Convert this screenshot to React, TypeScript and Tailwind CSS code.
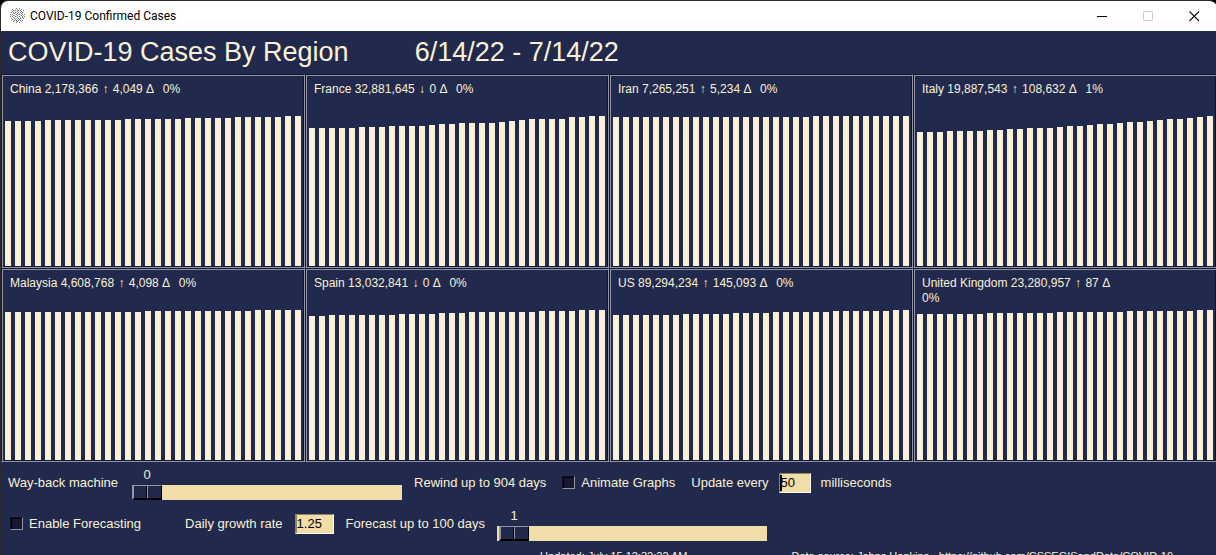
import { useState } from "react";

type Run = [height: number, days: number];

interface Region {
  name: string;
  total: string;
  arrow: "↑" | "↓";
  delta: string;
  percent: string;
  runs: Run[];
}

const regions: Region[] = [
  { name: "China", total: "2,178,366", arrow: "↑", delta: "4,049", percent: "0%", runs: [[145, 4], [146, 8], [147, 6], [148, 5], [149, 5], [150, 2]] },
  { name: "France", total: "32,881,645", arrow: "↓", delta: "0", percent: "0%", runs: [[138, 5], [139, 3], [140, 4], [141, 1], [142, 2], [143, 4], [144, 1], [145, 1], [146, 1], [147, 4], [149, 2], [150, 2]] },
  { name: "Iran", total: "7,265,251", arrow: "↑", delta: "5,234", percent: "0%", runs: [[149, 20], [150, 10]] },
  { name: "Italy", total: "19,887,543", arrow: "↑", delta: "108,632", percent: "1%", runs: [[134, 3], [135, 4], [136, 2], [137, 2], [138, 3], [139, 1], [140, 2], [141, 1], [142, 2], [143, 1], [144, 2], [145, 1], [146, 1], [147, 2], [148, 1], [149, 1], [150, 1]] },
  { name: "Malaysia", total: "4,608,768", arrow: "↑", delta: "4,098", percent: "0%", runs: [[148, 14], [149, 11], [150, 5]] },
  { name: "Spain", total: "13,032,841", arrow: "↓", delta: "0", percent: "0%", runs: [[144, 2], [145, 7], [146, 4], [147, 3], [148, 7], [149, 4], [150, 3]] },
  { name: "US", total: "89,294,234", arrow: "↑", delta: "145,093", percent: "0%", runs: [[145, 7], [146, 5], [147, 4], [148, 6], [149, 6], [150, 2]] },
  { name: "United Kingdom", total: "23,280,957", arrow: "↑", delta: "87", percent: "0%", runs: [[146, 7], [147, 7], [148, 7], [149, 7], [150, 2]] },
];

// Dotted virus: "#" is a dark speck, "+" a lighter one.
const virusDots = [
  "......#..#.....",
  "..#..+.#.+.#...",
  ".+.#.#+.#.#..#.",
  "..#.+..#.+.#...",
  ".#.#.#+.+.#.#+.",
  "...+#..#.+.#...",
  "#.#..+#.+#..#.#",
  ".+.#+..#..+#.+.",
  "#.#..#+.+#..#.#",
  "...#.+.#..+.#..",
  ".#..#.+.#.#..#.",
  "..#+.#.+.#.+...",
  ".+..#.#.#.#.#..",
  "...#..+#...+...",
  "......#..#.....",
];

function VirusIcon() {
  return (
    <svg viewBox="0 0 16 16" className="size-4 shrink-0" shapeRendering="crispEdges" aria-hidden="true">
      {virusDots.flatMap((row, y) =>
        [...row].map((dot, x) =>
          dot === "." ? null : (
            <rect key={`${x}-${y}`} x={x + 1} y={y} width="1" height="1" fill={dot === "#" ? "#7a7a7a" : "#bdbdbd"} />
          ),
        ),
      )}
    </svg>
  );
}

function TitleBar() {
  return (
    <div className="flex h-[30px] items-center bg-white pl-2 text-black">
      <VirusIcon />
      <span className="grow pl-[5px] font-['Roboto','Open_Sans',sans-serif] text-[12px]">COVID-19 Confirmed Cases</span>
      <button aria-label="Minimize" className="flex h-full w-[46px] items-center justify-center">
        <svg viewBox="0 0 11 11" className="size-[11px]"><path d="M0 5.5H10" stroke="#000" /></svg>
      </button>
      <button aria-label="Maximize" disabled className="flex h-full w-[46px] items-center justify-center">
        <svg viewBox="0 0 11 11" className="size-[11px]"><rect x=".5" y=".5" width="9" height="9" rx=".8" fill="none" stroke="#ccc" /></svg>
      </button>
      <button aria-label="Close" className="flex h-full w-[46px] items-center justify-center">
        <svg viewBox="0 0 11 11" className="size-[11px]"><path d="M.5 .5 10 10M10 .5.5 10" stroke="#111" strokeWidth="1.1" /></svg>
      </button>
    </div>
  );
}

function RegionPanel({ region }: { region: Region }) {
  const bars = region.runs.flatMap(([height, days]) => Array<number>(days).fill(height));
  return (
    <section className="border border-t-[#10152b] border-r-[#9295a6] border-b-[#9295a6] border-l-[#10152b] p-px shadow-[inset_1px_1px_0_#9295a6,inset_-1px_-1px_0_#10152b]">
      <h2 className="min-h-10 max-w-[212px] pt-[6px] pl-[7px] text-[12px] leading-[15px] whitespace-pre-wrap">
        {`${region.name} ${region.total} `}
        <span className="px-px">{region.arrow}</span>
        {` ${region.delta} `}
        <span className="pr-[2px]">Δ</span>
        {`  ${region.percent}`}
      </h2>
      <div className="flex h-[150px] items-end">
        {bars.map((height, i) => (
          <div key={i} className="flex-1 px-[2px]">
            <div className="bg-[#f9f1d7]" style={{ height }} />
          </div>
        ))}
      </div>
    </section>
  );
}

function Scale({ label, min, max, initial }: { label: string; min: number; max: number; initial: number }) {
  const [value, setValue] = useState(initial);
  const offset = Math.round((value / max) * 240);
  return (
    <div className="flex w-[270px] flex-col">
      <output className="w-[30px] text-center leading-5" style={{ marginLeft: offset }}>{value}</output>
      <input
        type="range"
        aria-label={label}
        min={min}
        max={max}
        value={value}
        onChange={(e) => setValue(Number(e.target.value))}
        className="m-0 block h-[15px] w-full appearance-none bg-[#f1dda8] [&::-webkit-slider-thumb]:h-[15px] [&::-webkit-slider-thumb]:w-[30px] [&::-webkit-slider-thumb]:appearance-none [&::-webkit-slider-thumb]:border-t [&::-webkit-slider-thumb]:border-r [&::-webkit-slider-thumb]:border-b-2 [&::-webkit-slider-thumb]:border-l-2 [&::-webkit-slider-thumb]:border-t-[#9295a6] [&::-webkit-slider-thumb]:border-r-black [&::-webkit-slider-thumb]:border-b-black [&::-webkit-slider-thumb]:border-l-[#9295a6] [&::-webkit-slider-thumb]:bg-[linear-gradient(90deg,#212a4c_12px,#000_12px,#000_13px,#9295a6_13px,#9295a6_14px,#212a4c_14px)]"
      />
    </div>
  );
}

function Check({ label }: { label: string }) {
  return (
    <label className="flex items-center gap-[6px]">
      <input
        type="checkbox"
        className="size-[13px] appearance-none border border-t-[#10152b] border-r-[#9295a6] border-b-[#9295a6] border-l-[#10152b] bg-[#191833] shadow-[inset_1px_1px_0_#000] checked:bg-[#f1dda8]"
      />
      {label}
    </label>
  );
}

const field =
  "h-5 border border-t-[#8f8262] border-r-[#fffbe6] border-b-[#fffbe6] border-l-[#8f8262] bg-[#f1dda8] px-px text-black shadow-[inset_1px_0_0_#8f8262] outline-none";

export default function App() {
  return (
    <div className="h-screen overflow-hidden bg-black font-['Liberation_Sans',Arial,sans-serif]">
      <div className="-mr-px min-h-full overflow-hidden rounded-t-lg border-t border-l border-[#2b2b2b] bg-[#212a4c] text-[#f9f1d7]">
        <TitleBar />
        <header className="flex h-[43px] items-center gap-[66px] pl-[7px] text-[27px]">
          <h1>COVID-19 Cases By Region</h1>
          <p>6/14/22 - 7/14/22</p>
        </header>
        <main className="grid grid-cols-4">
          {regions.map((region) => (
            <RegionPanel key={region.name} region={region} />
          ))}
        </main>
        <form className="flex flex-col gap-[6px] pt-[3px] text-[13px] whitespace-nowrap">
          <div className="flex items-center gap-3 pl-[7px]">
            <span className="pr-[2px]">Way-back machine</span>
            <Scale label="Way-back machine" min={0} max={904} initial={0} />
            <span className="pr-1">Rewind up to 904 days</span>
            <div className="pr-1"><Check label="Animate Graphs" /></div>
            <div className="flex items-center gap-[10px]">
              <label htmlFor="interval">Update every</label>
              <div className="relative flex">
                <input id="interval" defaultValue="50" className={`${field} w-8`} />
                <span className="absolute top-[2px] left-px h-4 w-[2px] bg-black" />
              </div>
              <span>milliseconds</span>
            </div>
          </div>
          <div className="flex items-center gap-3 pl-[9px]">
            <div className="pr-8"><Check label="Enable Forecasting" /></div>
            <label htmlFor="growth">Daily growth rate</label>
            <input id="growth" defaultValue="1.25" className={`${field} w-[39px]`} />
            <span>Forecast up to 100 days</span>
            <Scale label="Forecast days" min={0} max={100} initial={1} />
          </div>
        </form>
        <footer className="flex justify-end gap-[104px] pt-[9px] pr-[44px] text-[11px] leading-3">
          <span>Updated: July 15 12:32:22 AM</span>
          <span>Data source: Johns Hopkins - https://github.com/CSSEGISandData/COVID-19</span>
        </footer>
      </div>
    </div>
  );
}
